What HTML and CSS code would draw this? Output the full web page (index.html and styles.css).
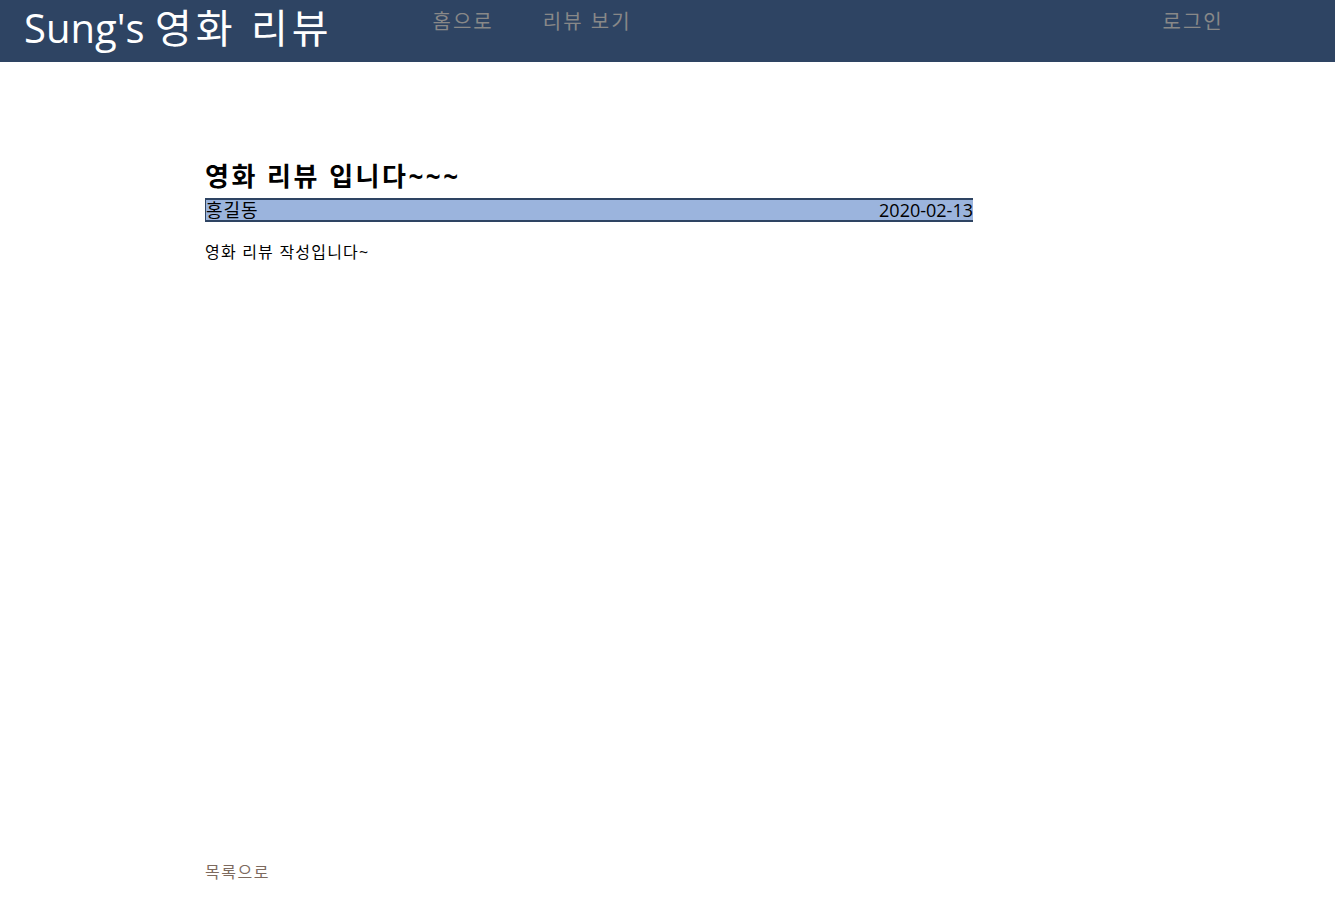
FILE: index.html
```html
<!DOCTYPE html>
<html lang="ko">
<head>
    <meta charset="UTF-8">
    <meta name="viewport" content="width=device-width, initial-scale=1.0">
    <title>Sung's 영화 리뷰</title>
    <link rel="stylesheet" href="styles.css">
</head>
<body>
    <header class="topbar">
        <a class="brand" href="#">Sung's <span class="brand-ko">영화 리뷰</span></a>
        <nav class="menu">
            <a href="#">홈으로</a>
            <a href="#">리뷰 보기</a>
        </nav>
        <a class="login" href="#">로그인</a>
    </header>

    <main class="review">
        <h2 class="review-title">영화 리뷰 입니다~~~</h2>
        <div class="review-meta">
            <span class="author">홍길동</span>
            <span>2020-02-13</span>
        </div>
        <p class="review-body">영화 리뷰 작성입니다~</p>
        <a class="back" href="#">목록으로</a>
    </main>
</body>
</html>
```
FILE: styles.css
```css
body {
    margin: 0;
    font-family: "Open Sans", "Noto Sans CJK KR", sans-serif;
    color: #000;
    background: #fff;
}

a {
    text-decoration: none;
}

.topbar {
    display: flex;
    align-items: flex-start;
    height: 62px;
    background: #2e4463;
    padding-left: 24px;
}

.brand {
    color: #fff;
    font-size: 40px;
    line-height: 55px;
    font-weight: 400;
    white-space: nowrap;
}

.brand-ko {
    letter-spacing: 4px;
}

.menu {
    display: flex;
    gap: 49px;
    margin-left: 100px;
    margin-top: 8px;
}

.menu a,
.login {
    color: #888;
    font-size: 20px;
    line-height: 28px;
    letter-spacing: 2px;
}

.login {
    margin-left: 531px;
    margin-top: 8px;
}

.review {
    margin-left: 205px;
    width: 768px;
    padding-top: 94px;
    min-height: 728px;
    display: flex;
    flex-direction: column;
}

.review-title {
    margin: 0 0 2px;
    font-size: 26px;
    line-height: 40px;
    font-weight: bold;
    letter-spacing: 2.5px;
}

.review-meta {
    display: flex;
    justify-content: space-between;
    background: #9bb4dd;
    border-top: 2px solid #2e4463;
    border-bottom: 2px solid #2e4463;
    border-left: 1px solid #2e4463;
    font-size: 18px;
    line-height: 20px;
}

.author {
    letter-spacing: 1px;
}

.review-body {
    margin: 18px 0 0;
    font-size: 16px;
    line-height: 24px;
    letter-spacing: 1.2px;
}

.back {
    margin-top: auto;
    color: #7d6a5e;
    font-size: 16px;
    line-height: 24px;
    letter-spacing: 1.5px;
}
```
